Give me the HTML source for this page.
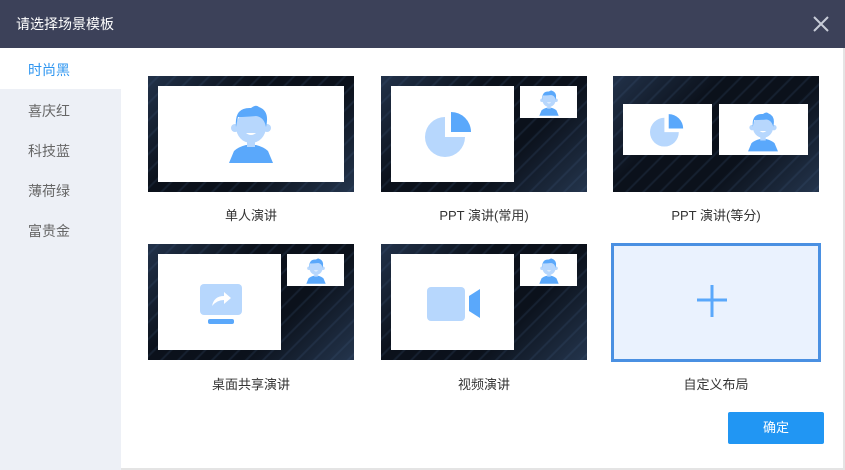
<!DOCTYPE html>
<html><head><meta charset="utf-8"><style>
*{margin:0;padding:0;box-sizing:border-box}
body{width:845px;height:470px;overflow:hidden;background:#fff;font-family:"Liberation Sans","Noto Sans CJK SC",sans-serif;position:relative;border-right:2px solid #e4e4e4;border-bottom:2px solid #e4e4e4}
.hdr{position:absolute;left:0;top:0;width:845px;height:48px;background:#3c4159;color:#fff;font-size:14px;line-height:48px;padding-left:16px}
.close{position:absolute;right:12px;top:14px;width:20px;height:20px}
.side{position:absolute;left:0;top:48px;width:121px;height:422px;background:#edf0f6}
.side div{height:40px;line-height:44px;padding-left:28px;font-size:14px;color:#666}
.side .on{background:#fff;color:#2d95f0;height:41px}
.card{position:absolute;width:206px;height:116px;background:#0e1521;overflow:hidden}
.card:before{content:"";position:absolute;inset:0;background:repeating-linear-gradient(135deg,rgba(70,100,140,0) 0 6px,rgba(70,100,140,.18) 7px 8px,rgba(0,0,0,0) 9px 12px),linear-gradient(135deg,#22324a 0%,#0b111b 35%,#0b111b 65%,#24354d 100%)}
.w{position:absolute;background:#fff}
.lbl{position:absolute;width:206px;text-align:center;font-size:13px;color:#333}
.btn{position:absolute;left:728px;top:412px;width:96px;height:32px;background:#2196f3;color:#fff;font-size:13px;text-align:center;line-height:32px;border-radius:2px}
svg{position:absolute}
</style></head><body>
<svg width="0" height="0" style="position:absolute"><defs>
<symbol id="p" viewBox="0 0 50 60"><path d="M3 60 L8 48 Q12 44 20 42 L30 42 Q38 44 42 48 L47 60Z" fill="#5aa8fb"/><rect x="21" y="34" width="8" height="10" fill="#b7d7fd"/><circle cx="9" cy="25" r="4" fill="#b7d7fd"/><circle cx="41" cy="25" r="4" fill="#b7d7fd"/><ellipse cx="25" cy="24" rx="15" ry="16" fill="#b7d7fd"/><path d="M10 24 Q8 4 25 5 Q30 1 33 4 Q44 8 40 24 Q38 14 30 13 Q20 14 12 14 Z" fill="#5aa8fb"/><path d="M20 30 Q25 34 30 30 Z" fill="#fff"/></symbol>
<symbol id="pie" viewBox="0 0 50 50"><path d="M20 8 A20 20 0 1 0 40 28 L20 28 Z" fill="#b7d7fd"/><path d="M26 3 A20 20 0 0 1 46 23 L26 23 Z" fill="#5aa8fb"/></symbol>
</defs></svg>
<div class="hdr">请选择场景模板</div>
<svg class="close" viewBox="0 0 20 20"><path d="M3 3L17 17M17 3L3 17" stroke="#c8ccd8" stroke-width="2"/></svg>
<div class="side"><div class="on">时尚黑</div><div>喜庆红</div><div>科技蓝</div><div>薄荷绿</div><div>富贵金</div></div>

<div class="card" style="left:148px;top:76px"><div class="w" style="left:10px;top:10px;width:186px;height:96px"></div>
<svg style="left:78px;top:27px" width="50" height="60"><use href="#p"/></svg></div>
<div class="lbl" style="left:148px;top:205px">单人演讲</div>

<div class="card" style="left:381px;top:76px"><div class="w" style="left:10px;top:10px;width:123px;height:96px"></div><div class="w" style="left:139px;top:10px;width:57px;height:32px"></div>
<svg style="left:44px;top:33px" width="50" height="50"><use href="#pie"/></svg>
<svg style="left:157px;top:13px" width="22" height="27"><use href="#p"/></svg></div>
<div class="lbl" style="left:381px;top:205px">PPT 演讲(常用)</div>

<div class="card" style="left:613px;top:76px"><div class="w" style="left:10px;top:28px;width:89px;height:51px"></div><div class="w" style="left:106px;top:28px;width:89px;height:51px"></div>
<svg style="left:37px;top:36px" width="36" height="36"><use href="#pie"/></svg>
<svg style="left:133px;top:34px" width="34" height="42"><use href="#p"/></svg></div>
<div class="lbl" style="left:613px;top:205px">PPT 演讲(等分)</div>

<div class="card" style="left:148px;top:244px"><div class="w" style="left:10px;top:10px;width:123px;height:96px"></div><div class="w" style="left:139px;top:10px;width:57px;height:32px"></div>
<svg style="left:50px;top:40px" width="46" height="42" viewBox="0 0 46 42"><rect x="2" y="0" width="42" height="31" rx="4" fill="#b7d7fd"/><rect x="10" y="35" width="26" height="5" rx="2" fill="#5aa8fb"/><path d="M14 22 Q16 12 26 12 L26 8 L33 14 L26 20 L26 16 Q19 16 14 22Z" fill="#fff"/></svg>
<svg style="left:157px;top:13px" width="22" height="27"><use href="#p"/></svg></div>
<div class="lbl" style="left:148px;top:374px">桌面共享演讲</div>

<div class="card" style="left:381px;top:244px"><div class="w" style="left:10px;top:10px;width:123px;height:96px"></div><div class="w" style="left:139px;top:10px;width:57px;height:32px"></div>
<svg style="left:46px;top:43px" width="55" height="34" viewBox="0 0 55 34"><rect x="0" y="0" width="38" height="34" rx="4" fill="#b7d7fd"/><path d="M42 9 L53 2 L53 31 L42 24 Z" fill="#5aa8fb"/></svg>
<svg style="left:157px;top:13px" width="22" height="27"><use href="#p"/></svg></div>
<div class="lbl" style="left:381px;top:374px">视频演讲</div>

<div style="position:absolute;left:611px;top:243px;width:210px;height:119px;border:3px solid #4a90e2;background:#eaf2fe"></div>
<svg style="left:696px;top:284px" width="32" height="34"><path d="M16 1V33M1 16H31" stroke="#5aa8fb" stroke-width="3"/></svg>
<div class="lbl" style="left:613px;top:374px">自定义布局</div>

<div class="btn">确定</div>
</body></html>
